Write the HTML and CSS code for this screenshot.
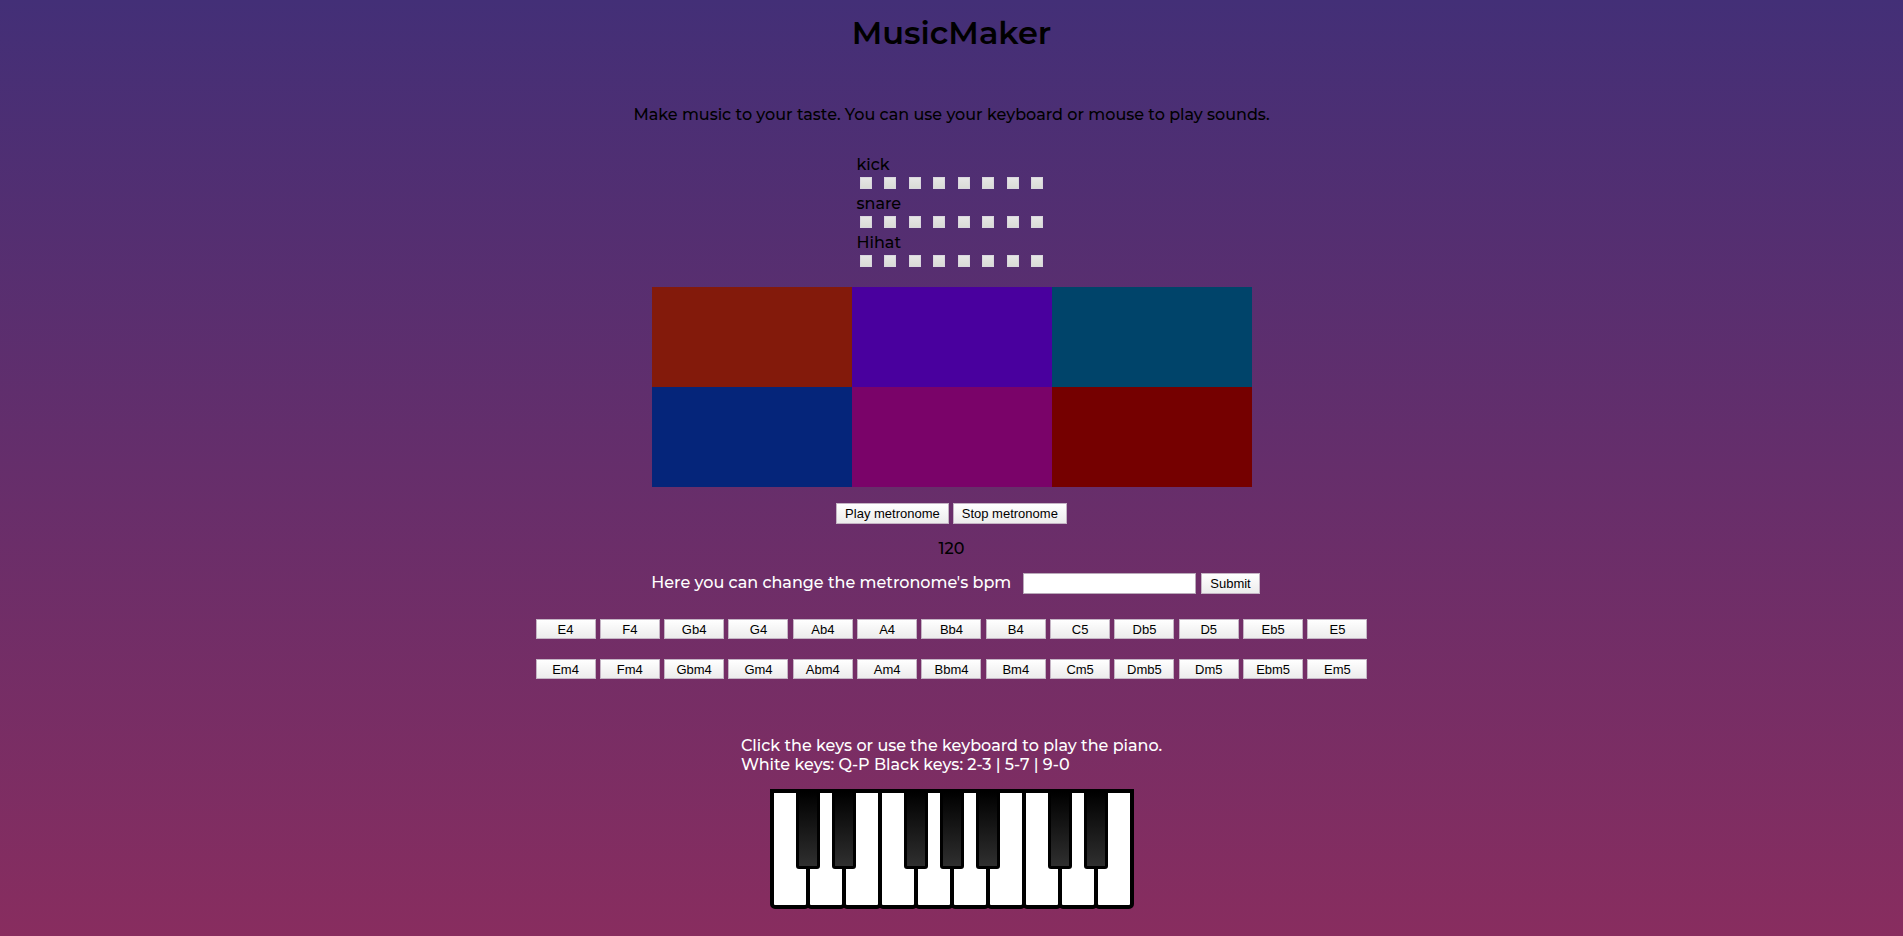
FILE: index.html
```html
<!DOCTYPE html>
<html lang="en">
<head>
<meta charset="utf-8">
<meta name="viewport" content="width=device-width, initial-scale=1">
<title>MusicMaker</title>
<link rel="stylesheet" href="styles.css">
</head>
<body>
<main class="page">
  <h1 class="title">MusicMaker</h1>
  <p class="tagline">Make music to your taste. You can use your keyboard or mouse to play sounds.</p>

  <section class="sequencer" aria-label="Drum sequencer">
    <div class="track">
      <span class="track-name">kick</span>
      <div class="steps">
        <input type="checkbox" class="step" aria-label="kick 1"><input type="checkbox" class="step" aria-label="kick 2"><input type="checkbox" class="step" aria-label="kick 3"><input type="checkbox" class="step" aria-label="kick 4"><input type="checkbox" class="step" aria-label="kick 5"><input type="checkbox" class="step" aria-label="kick 6"><input type="checkbox" class="step" aria-label="kick 7"><input type="checkbox" class="step" aria-label="kick 8">
      </div>
    </div>
    <div class="track">
      <span class="track-name">snare</span>
      <div class="steps">
        <input type="checkbox" class="step" aria-label="snare 1"><input type="checkbox" class="step" aria-label="snare 2"><input type="checkbox" class="step" aria-label="snare 3"><input type="checkbox" class="step" aria-label="snare 4"><input type="checkbox" class="step" aria-label="snare 5"><input type="checkbox" class="step" aria-label="snare 6"><input type="checkbox" class="step" aria-label="snare 7"><input type="checkbox" class="step" aria-label="snare 8">
      </div>
    </div>
    <div class="track">
      <span class="track-name">Hihat</span>
      <div class="steps">
        <input type="checkbox" class="step" aria-label="Hihat 1"><input type="checkbox" class="step" aria-label="Hihat 2"><input type="checkbox" class="step" aria-label="Hihat 3"><input type="checkbox" class="step" aria-label="Hihat 4"><input type="checkbox" class="step" aria-label="Hihat 5"><input type="checkbox" class="step" aria-label="Hihat 6"><input type="checkbox" class="step" aria-label="Hihat 7"><input type="checkbox" class="step" aria-label="Hihat 8">
      </div>
    </div>
  </section>

  <section class="pads" aria-label="Drum pads">
    <button type="button" class="pad pad-rust" aria-label="Pad 1"></button>
    <button type="button" class="pad pad-violet" aria-label="Pad 2"></button>
    <button type="button" class="pad pad-teal" aria-label="Pad 3"></button>
    <button type="button" class="pad pad-navy" aria-label="Pad 4"></button>
    <button type="button" class="pad pad-plum" aria-label="Pad 5"></button>
    <button type="button" class="pad pad-red" aria-label="Pad 6"></button>
  </section>

  <div class="metronome">
    <button type="button" class="btn">Play metronome</button>
    <button type="button" class="btn">Stop metronome</button>
  </div>
  <p class="bpm">120</p>
  <form class="bpm-form">
    <label class="bpm-label" for="bpm">Here you can change the metronome's bpm</label>
    <input class="bpm-input" id="bpm" type="text">
    <button type="submit" class="btn">Submit</button>
  </form>

  <section class="chords" aria-label="Chords">
    <div class="chord-row">
      <button type="button" class="btn chord">E4</button>
      <button type="button" class="btn chord">F4</button>
      <button type="button" class="btn chord">Gb4</button>
      <button type="button" class="btn chord">G4</button>
      <button type="button" class="btn chord">Ab4</button>
      <button type="button" class="btn chord">A4</button>
      <button type="button" class="btn chord">Bb4</button>
      <button type="button" class="btn chord">B4</button>
      <button type="button" class="btn chord">C5</button>
      <button type="button" class="btn chord">Db5</button>
      <button type="button" class="btn chord">D5</button>
      <button type="button" class="btn chord">Eb5</button>
      <button type="button" class="btn chord">E5</button>
    </div>
    <div class="chord-row">
      <button type="button" class="btn chord">Em4</button>
      <button type="button" class="btn chord">Fm4</button>
      <button type="button" class="btn chord">Gbm4</button>
      <button type="button" class="btn chord">Gm4</button>
      <button type="button" class="btn chord">Abm4</button>
      <button type="button" class="btn chord">Am4</button>
      <button type="button" class="btn chord">Bbm4</button>
      <button type="button" class="btn chord">Bm4</button>
      <button type="button" class="btn chord">Cm5</button>
      <button type="button" class="btn chord">Dmb5</button>
      <button type="button" class="btn chord">Dm5</button>
      <button type="button" class="btn chord">Ebm5</button>
      <button type="button" class="btn chord">Em5</button>
    </div>
  </section>

  <p class="hint">Click the keys or use the keyboard to play the piano.<br>White keys: Q-P Black keys: 2-3 | 5-7 | 9-0</p>

  <section class="piano" aria-label="Piano">
    <button type="button" class="key white" aria-label="Q"></button>
    <button type="button" class="key black" aria-label="2"></button>
    <button type="button" class="key white" aria-label="W"></button>
    <button type="button" class="key black" aria-label="3"></button>
    <button type="button" class="key white" aria-label="E"></button>
    <button type="button" class="key white" aria-label="R"></button>
    <button type="button" class="key black" aria-label="5"></button>
    <button type="button" class="key white" aria-label="T"></button>
    <button type="button" class="key black" aria-label="6"></button>
    <button type="button" class="key white" aria-label="Y"></button>
    <button type="button" class="key black" aria-label="7"></button>
    <button type="button" class="key white" aria-label="U"></button>
    <button type="button" class="key white" aria-label="I"></button>
    <button type="button" class="key black" aria-label="9"></button>
    <button type="button" class="key white" aria-label="O"></button>
    <button type="button" class="key black" aria-label="0"></button>
    <button type="button" class="key white" aria-label="P"></button>
  </section>
</main>
</body>
</html>
```

FILE: styles.css
```css
* {
  box-sizing: border-box;
}

body {
  margin: 0;
  min-height: 100vh;
  background: linear-gradient(#432f77, #882d5f) no-repeat;
  color: #000;
  font: 500 16px/19px Montserrat, Inter, sans-serif;
}

.page {
  display: flex;
  flex-direction: column;
  align-items: center;
  padding: 13px 8px 24px;
}

.title {
  margin: 0 0 53px;
  font-size: 32px;
  line-height: 39px;
  font-weight: 600;
}

.tagline {
  margin: 0 0 31px;
}

.sequencer {
  width: 190px;
  margin-bottom: 15px;
}

.track-name {
  display: block;
}

.steps {
  display: flex;
  justify-content: space-between;
  padding: 3px 3px 5px;
}

.step {
  appearance: none;
  width: 12px;
  height: 12px;
  margin: 0;
  border: 1px solid #d9d6de;
  background: linear-gradient(#e6e6e6, #dadcd6);
}

.step:checked {
  background: #333;
}

.pads {
  display: grid;
  grid-template-columns: repeat(3, 200px);
  grid-auto-rows: 100px;
  margin-bottom: 16px;
}

.pad {
  border: 0;
  padding: 0;
}

.pad-rust { background: #831a0b; }
.pad-violet { background: #49009e; }
.pad-teal { background: #00446a; }
.pad-navy { background: #05257a; }
.pad-plum { background: #7a0369; }
.pad-red { background: #750000; }

.btn {
  height: 21px;
  padding: 0 8px;
  border: 1px solid #c4b4c4;
  background: linear-gradient(#fff, #ececec);
  color: #000;
  font: 13px/19px "Liberation Sans", Arial, sans-serif;
}

.metronome {
  display: flex;
  gap: 4px;
}

.bpm {
  margin: 15px 0;
}

.bpm-form {
  display: flex;
  align-items: flex-start;
  margin: 0 0 25px;
  padding-left: 8px;
}

.bpm-label,
.hint {
  color: #fff;
}

.bpm-label {
  margin-right: 12px;
}

.bpm-input {
  width: 173px;
  height: 21px;
  margin-right: 5px;
  padding: 0 4px;
  border: 1px solid #b9a9b9;
  background: #fff;
  font: 13px "Liberation Sans", Arial, sans-serif;
}

.chords {
  display: grid;
  gap: 20px;
  width: 832px;
  max-width: 100%;
  margin-bottom: 57px;
}

.chord-row {
  display: flex;
  flex-wrap: wrap;
  justify-content: space-between;
}

.chord {
  width: 60px;
  height: 20px;
  padding: 1px 0 0;
  line-height: 17px;
}

.hint {
  margin: 0 0 15px;
}

.piano {
  display: flex;
  align-items: flex-start;
}

.key {
  padding: 0;
  border: 4px solid #000;
}

.white {
  width: 40px;
  height: 120px;
  border-radius: 0 0 5px 5px;
  background: #fff;
}

.white + .white {
  margin-left: -4px;
}

.black {
  position: relative;
  z-index: 1;
  width: 24px;
  height: 80px;
  margin: 0 -14px;
  border-width: 3px;
  border-radius: 0 0 3px 3px;
  background: linear-gradient(#000, #2f2f2f);
}
```
